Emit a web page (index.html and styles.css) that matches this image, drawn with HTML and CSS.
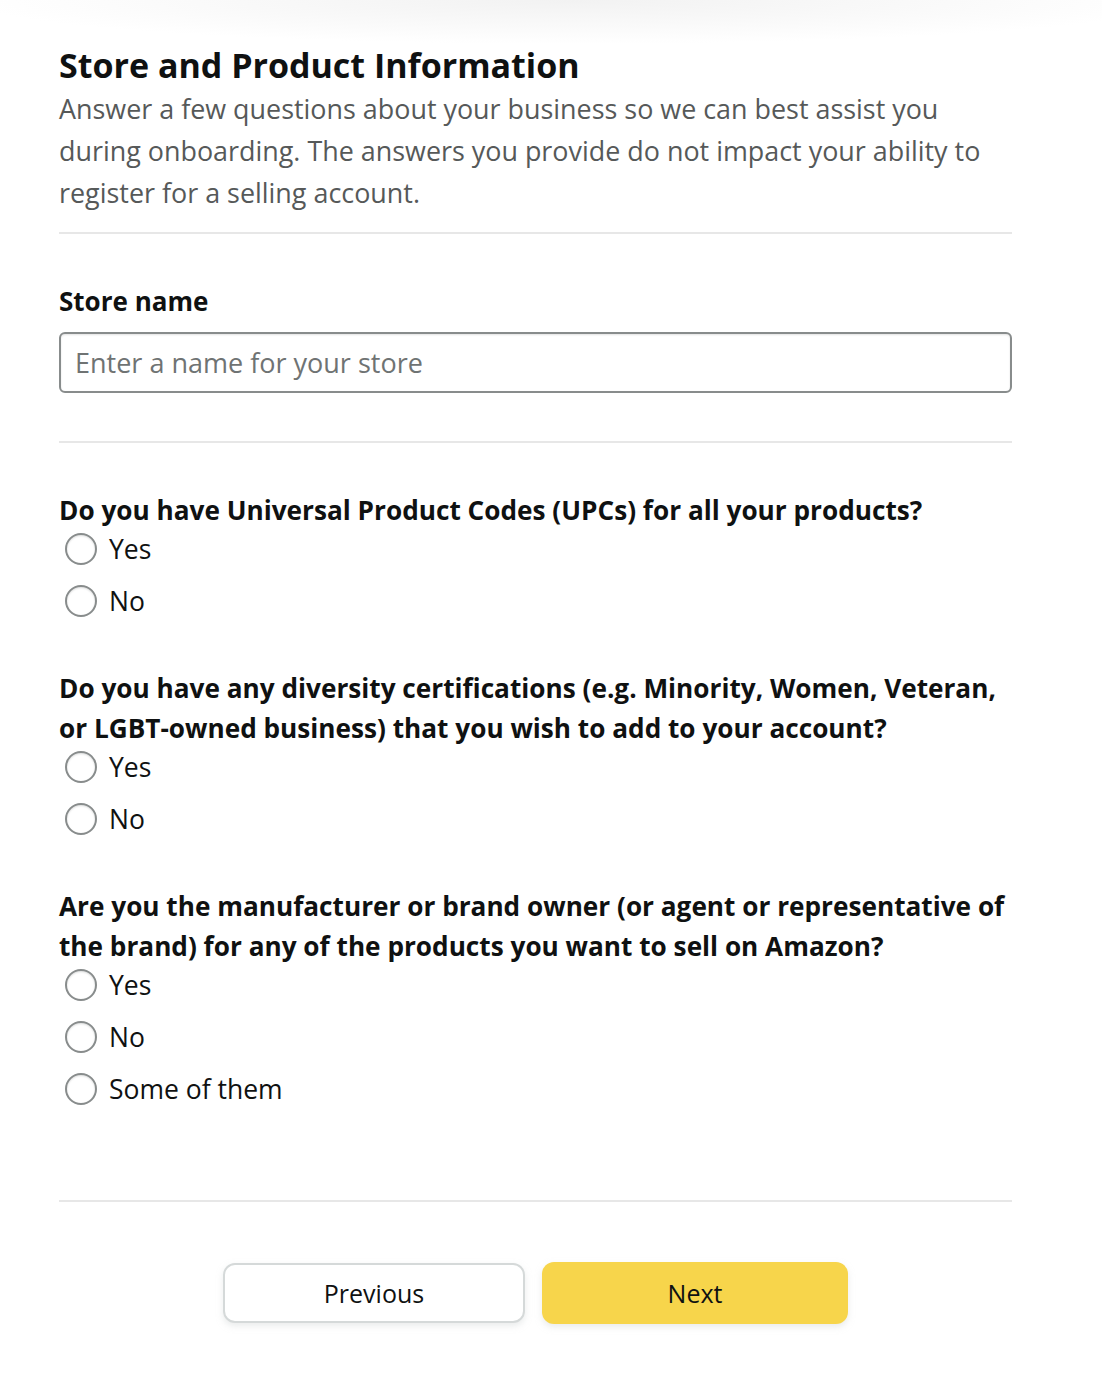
FILE: index.html
```html
<!DOCTYPE html>
<html lang="en">
<head>
<meta charset="utf-8">
<title>Store and Product Information</title>
<link rel="stylesheet" href="styles.css">
</head>
<body>
<div class="top-shade"></div>
<main class="form">
  <header class="intro">
    <h1 class="title">Store and Product Information</h1>
    <p class="desc">Answer a few questions about your business so we can best assist you during onboarding. The answers you provide do not impact your ability to register for a selling account.</p>
  </header>
  <hr class="sep">
  <section class="field">
    <label class="label" for="store">Store name</label>
    <input class="input" id="store" type="text" placeholder="Enter a name for your store">
  </section>
  <hr class="sep">
  <section class="questions">
    <fieldset class="q">
      <legend class="q-text">Do you have Universal Product Codes (UPCs) for all your products?</legend>
      <label class="opt"><span class="radio"></span><span>Yes</span></label>
      <label class="opt"><span class="radio"></span><span>No</span></label>
    </fieldset>
    <fieldset class="q">
      <legend class="q-text">Do you have any diversity certifications (e.g. Minority, Women, Veteran, or LGBT-owned business) that you wish to add to your account?</legend>
      <label class="opt"><span class="radio"></span><span>Yes</span></label>
      <label class="opt"><span class="radio"></span><span>No</span></label>
    </fieldset>
    <fieldset class="q">
      <legend class="q-text">Are you the manufacturer or brand owner (or agent or representative of the brand) for any of the products you want to sell on Amazon?</legend>
      <label class="opt"><span class="radio"></span><span>Yes</span></label>
      <label class="opt"><span class="radio"></span><span>No</span></label>
      <label class="opt"><span class="radio"></span><span>Some of them</span></label>
    </fieldset>
  </section>
  <hr class="sep">
  <div class="actions">
    <button class="btn btn-prev" type="button">Previous</button>
    <button class="btn btn-next" type="button">Next</button>
  </div>
</main>
</body>
</html>
```

FILE: styles.css
```css
html, body {
  margin: 0;
  padding: 0;
  background: #fff;
}
body {
  font-family: "Open Sans", "Noto Sans", Arial, sans-serif;
  color: #0f1111;
}
.top-shade {
  height: 44px;
  background: radial-gradient(ellipse 55% 100% at 52% 0, #f2f2f2 0%, #f9f9f9 55%, #ffffff 100%);
}
.form {
  width: 953px;
  margin-left: 59px;
  padding-bottom: 70px;
}
.intro {
  display: flex;
  flex-direction: column;
}
.title {
  margin: 0;
  font-size: 34px;
  line-height: 42px;
  font-weight: 700;
  color: #0f1111;
}
.desc {
  margin: 2px 0 0;
  max-width: 934px;
  font-size: 26.9px;
  line-height: 42px;
  color: #565959;
}
.sep {
  margin: 18px 0 0;
  border: 0;
  height: 2px;
  background: #e7e7e7;
}
.field {
  display: flex;
  flex-direction: column;
  padding: 48px 0 48px;
}
.label {
  font-size: 26px;
  line-height: 38px;
  font-weight: 700;
}
.input {
  margin-top: 12px;
  box-sizing: border-box;
  height: 61px;
  width: 100%;
  border: 2px solid #888c8c;
  border-radius: 6px;
  padding: 0 14px;
  font-family: inherit;
  font-size: 27px;
  color: #0f1111;
  box-shadow: inset 0 1px 2px rgba(15, 17, 17, 0.12);
  outline: none;
}
.input::placeholder {
  color: #6f7373;
}
.field + .sep {
  margin-top: 0;
}
.questions {
  display: flex;
  flex-direction: column;
  gap: 48px;
  padding: 47px 0 92px;
}
.q {
  margin: 0;
  padding: 0;
  border: 0;
  display: flex;
  flex-direction: column;
  gap: 14px;
}
.q-text {
  padding: 0;
  font-size: 26.2px;
  line-height: 40px;
  font-weight: 700;
  color: #0f1111;
  margin-bottom: 0;
}
.opt {
  display: flex;
  align-items: center;
  gap: 12px;
  height: 38px;
  padding-left: 6px;
  font-size: 26.5px;
  color: #0f1111;
}
.radio {
  box-sizing: border-box;
  width: 32px;
  height: 32px;
  border-radius: 50%;
  border: 2px solid #888c8c;
  background: #fff;
  box-shadow: inset 0 1px 2px rgba(15, 17, 17, 0.15);
  flex: none;
}
.questions + .sep {
  margin-top: 0;
}
.actions {
  display: flex;
  justify-content: center;
  align-items: center;
  gap: 17px;
  padding-top: 60px;
}
.btn {
  box-sizing: border-box;
  font-family: inherit;
  font-size: 25px;
  color: #0f1111;
  border-radius: 12px;
  cursor: pointer;
}
.btn-prev {
  width: 302px;
  height: 60px;
  background: #fff;
  border: 2px solid #d5d9d9;
  box-shadow: 0 3px 6px rgba(213, 217, 217, 0.5);
}
.btn-next {
  width: 306px;
  height: 62px;
  background: #f7d54b;
  border: 0;
  box-shadow: 0 3px 6px rgba(213, 217, 217, 0.5);
}
```
